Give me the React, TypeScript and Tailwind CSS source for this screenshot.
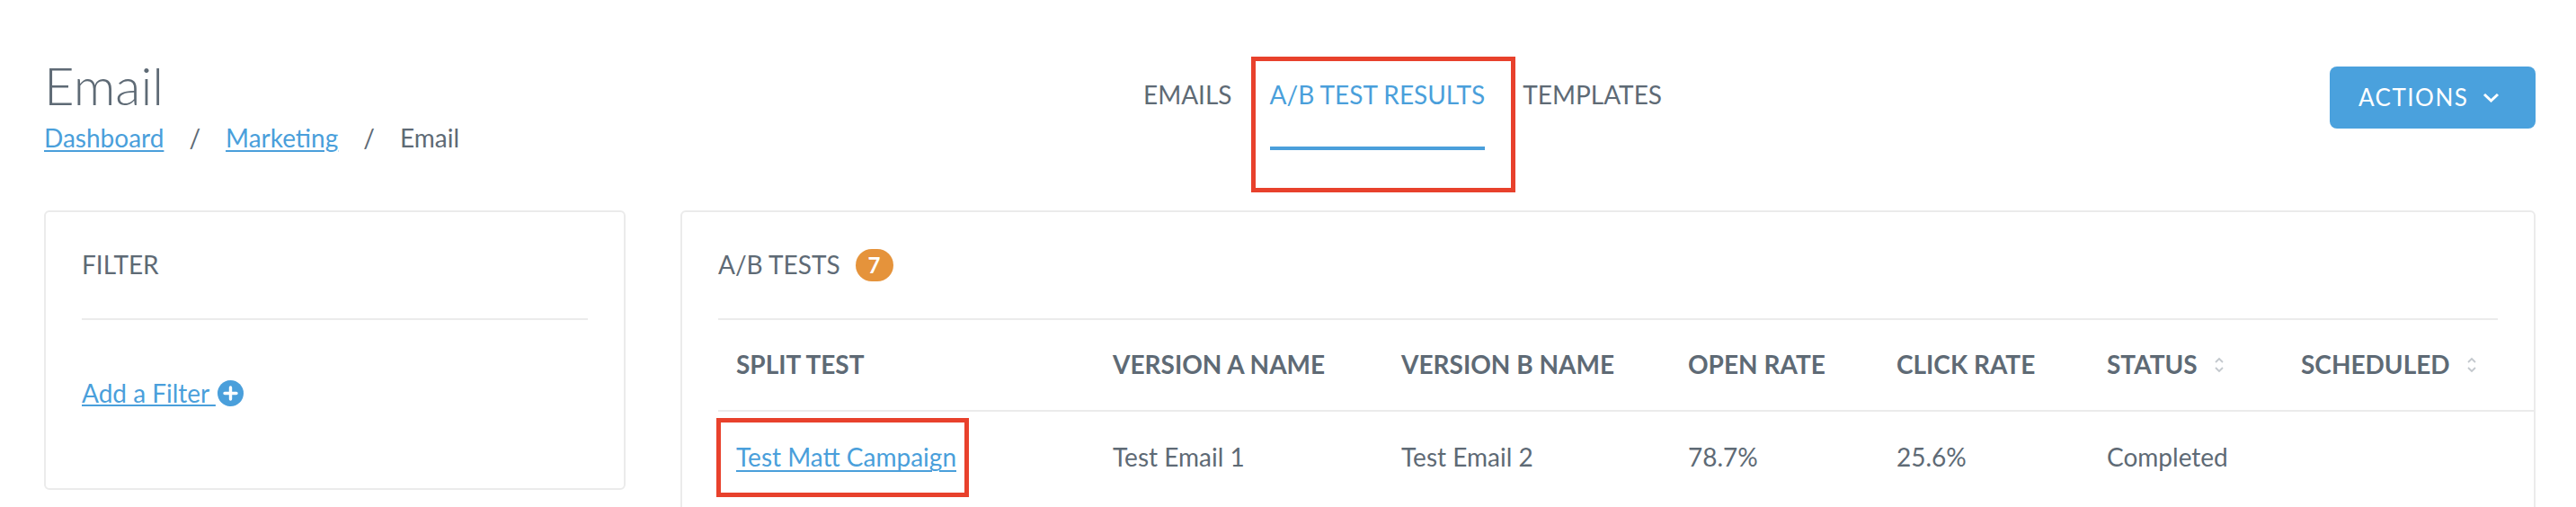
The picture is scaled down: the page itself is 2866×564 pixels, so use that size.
import React from "react";

const headers = [
  { label: "SPLIT TEST" },
  { label: "VERSION A NAME" },
  { label: "VERSION B NAME" },
  { label: "OPEN RATE" },
  { label: "CLICK RATE" },
  { label: "STATUS", sortable: true },
  { label: "SCHEDULED", sortable: true },
];

const rows = [
  {
    name: "Test Matt Campaign",
    versionA: "Test Email 1",
    versionB: "Test Email 2",
    openRate: "78.7%",
    clickRate: "25.6%",
    status: "Completed",
    scheduled: "",
  },
];

function SortIcon() {
  return (
    <svg width="12" height="20" viewBox="0 0 12 20" className="ml-[18px]">
      <polyline points="2,7 6,3 10,7" fill="none" stroke="#c3c8cd" strokeWidth="1.8" />
      <polyline points="2,13 6,17 10,13" fill="none" stroke="#c3c8cd" strokeWidth="1.8" />
    </svg>
  );
}

function PlusCircle() {
  return (
    <svg width="29" height="29" viewBox="0 0 29 29" className="ml-[2px]">
      <circle cx="14.5" cy="14.5" r="14.5" fill="#4a9fdb" />
      <path d="M14.5 8v13M8 14.5h13" stroke="#fff" strokeWidth="3.4" strokeLinecap="round" />
    </svg>
  );
}

function App() {
  return (
    <div className="min-h-screen bg-white font-['Lato',sans-serif] text-[#5e6a75] pl-[49px] pr-[45px] pt-[60px] overflow-hidden">
      {/* page header */}
      <div className="flex items-start justify-between">
        <div>
          <h1 className="text-[58px] font-light leading-[1.2]">Email</h1>
          <div className="mt-[7px] flex items-center text-[28px] leading-[1.2]">
            <a className="text-[#4a9fdb] underline decoration-2 underline-offset-[3px]">Dashboard</a>
            <span className="mx-[28px]">/</span>
            <a className="text-[#4a9fdb] underline decoration-2 underline-offset-[3px]">Marketing</a>
            <span className="mx-[28px]">/</span>
            <span>Email</span>
          </div>
        </div>

        <nav className="mt-[29px] ml-[18px] flex gap-[42px] text-[28px] leading-[1.2]">
          <div className="flex flex-col">
            <span>EMAILS</span>
            <div className="mt-[40px] h-[4px]" />
          </div>
          <div className="relative flex flex-col text-[#4a9fdb]">
            <span>A/B TEST RESULTS</span>
            <div className="mt-[40px] h-[4px] bg-[#4a9fdb]" />
            <div className="absolute -left-[21px] -right-[34px] -top-[26px] -bottom-[47px] border-[5px] border-[#e8412c]" />
          </div>
          <div className="flex flex-col">
            <span>TEMPLATES</span>
            <div className="mt-[40px] h-[4px]" />
          </div>
        </nav>

        <button className="mt-[14px] flex h-[69px] w-[229px] items-center rounded-[8px] bg-[#4aa1dd] pl-[32px] text-[26px] tracking-[1.5px] text-white">
          ACTIONS
          <svg width="19" height="11" viewBox="0 0 19 11" className="ml-[16px]">
            <polyline points="2,2 9.5,9 17,2" fill="none" stroke="#fff" strokeWidth="3" />
          </svg>
        </button>
      </div>

      <div className="mt-[64px] flex items-start gap-[61px]">
        {/* filter panel */}
        <div className="h-[311px] w-[647px] shrink-0 rounded-[6px] border-2 border-[#ebebeb] px-[40px]">
          <div className="flex h-[120px] items-center border-b-2 border-[#ebebeb] text-[28px] leading-[1.2]">
            FILTER
          </div>
          <div className="mt-[65px] flex items-center text-[28px] leading-[1.2]">
            <a className="text-[#4a9fdb] underline decoration-2 underline-offset-[2px]">{"Add a Filter\u00a0"}</a>
            <PlusCircle />
          </div>
        </div>

        {/* a/b tests panel */}
        <div className="flex-1 rounded-[6px] border-2 border-[#ebebeb] pl-[40px] pb-[60px]">
          <div className="mr-[40px] flex h-[120px] items-center border-b-2 border-[#ebebeb] text-[28px] leading-[1.2]">
            A/B TESTS
            <span className="ml-[17px] flex h-[36px] w-[42px] items-center justify-center rounded-full bg-[#e5933b] text-[24px] font-bold text-white">
              7
            </span>
          </div>

          <div className="grid h-[102px] grid-cols-[419px_321px_319px_232px_234px_216px_1fr] items-center border-b-2 border-[#ebebeb] text-[28px] font-bold leading-[1.2]">
            {headers.map((h) => (
              <div key={h.label} className="flex items-center pl-[20px]">
                {h.label}
                {h.sortable && <SortIcon />}
              </div>
            ))}
          </div>

          {rows.map((r) => (
            <div
              key={r.name}
              className="grid h-[102px] grid-cols-[419px_321px_319px_232px_234px_216px_1fr] items-center text-[28px] leading-[1.2]"
            >
              <div className="pl-[20px]">
                <span className="relative inline-block">
                  <a className="text-[#4a9fdb] underline decoration-2 underline-offset-[4px]">{r.name}</a>
                  <span className="absolute -left-[22px] -right-[14px] -top-[27px] -bottom-[27px] border-[5px] border-[#e8412c]" />
                </span>
              </div>
              <div className="pl-[20px]">{r.versionA}</div>
              <div className="pl-[20px]">{r.versionB}</div>
              <div className="pl-[20px]">{r.openRate}</div>
              <div className="pl-[20px]">{r.clickRate}</div>
              <div className="pl-[20px]">{r.status}</div>
              <div className="pl-[20px]">{r.scheduled}</div>
            </div>
          ))}
        </div>
      </div>
    </div>
  );
}

export default App;
